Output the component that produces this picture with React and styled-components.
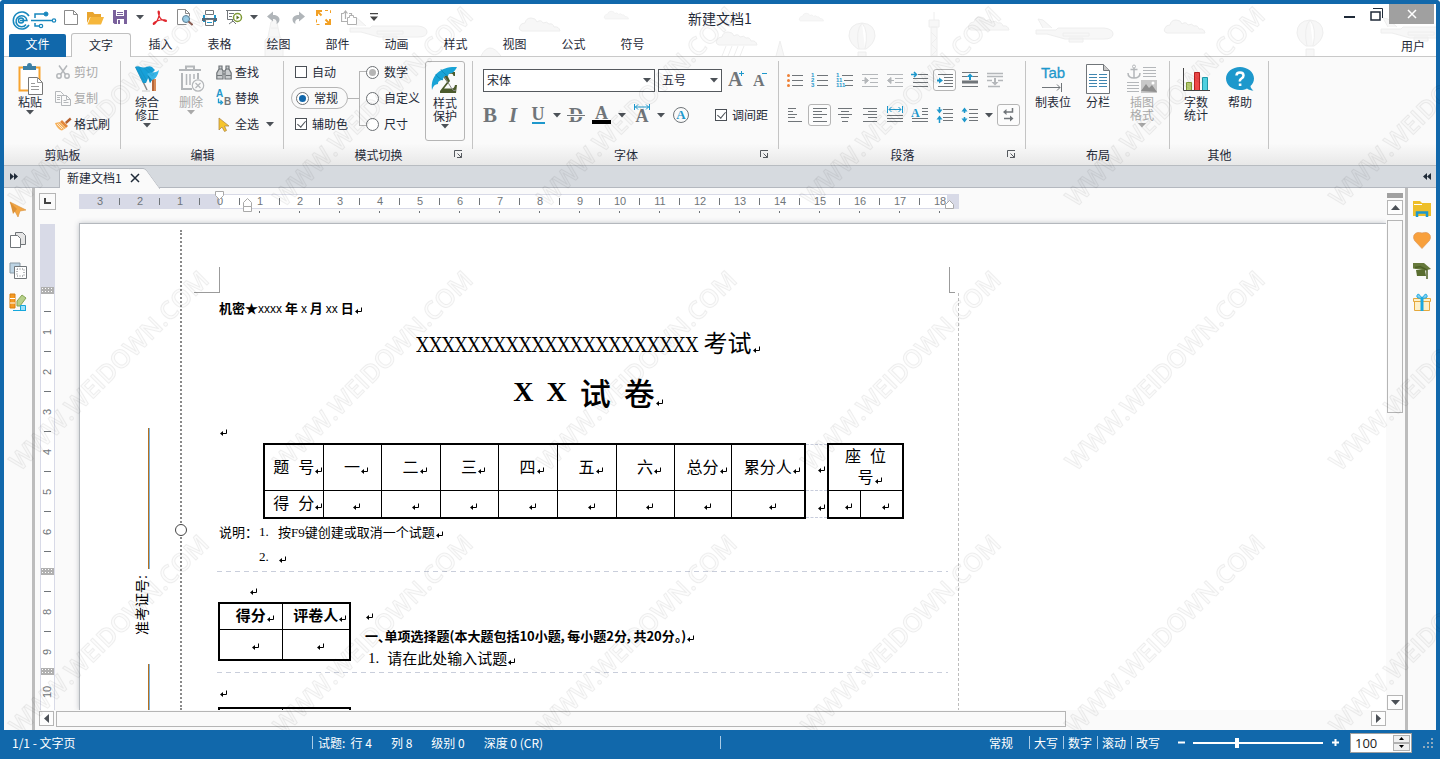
import React from 'react'
import styled, { createGlobalStyle, css } from 'styled-components'

const BLUE = '#1168ab'
const ACCENT = '#1e98cc'
const GREY = '#707579'
const PALE = '#b4b7ba'
const INK = '#1f2a38'

const GlobalStyle = createGlobalStyle`
  * {
    box-sizing: border-box;
  }

  body {
    margin: 0;
    overflow: hidden;
    color: ${INK};
    font-family: 'Noto Sans CJK SC', sans-serif;
    font-size: 12px;
    line-height: 16px;
  }

  button, input, select {
    margin: 0;
    padding: 0;
    border: 0;
    background: none;
    color: inherit;
    font: inherit;
  }

  p, h1, h2 {
    margin: 0;
    font-weight: 400;
  }
`

/* ---------- window ---------- */

const Window = styled.div`
  position: relative;
  display: flex;
  flex-direction: column;
  height: 100vh;
  border: 4px solid ${BLUE};
  border-bottom: 0;
  border-radius: 4px 4px 0 0;
  background: #fff;
`

const Header = styled.header`
  position: relative;
  height: 53px;
  border-bottom: 1px solid #c9c9c9;
  flex: none;
`

const Scenery = styled.svg`
  position: absolute;
  inset: 0;
  width: 100%;
  height: 100%;
`

const TitleBar = styled.div`
  position: relative;
  display: grid;
  grid-template-columns: 1fr auto 1fr;
  height: 29px;
`

const QuickAccess = styled.div`
  display: flex;
  align-items: center;
  padding: 0 0 4px 8px;
`

const Logo = styled.svg`
  width: 46px;
  height: 22px;
  margin-top: 5px;
`

const ToolButton = styled.button`
  display: flex;
  align-items: center;
  justify-content: center;
  flex: none;
  width: ${({ $w }) => $w || 25}px;
  height: 22px;
  border-radius: 3px;
  ${({ $boxed }) => $boxed && css`
    border: 1px solid #b5b5b5;
    background: #fcfcfc;
  `}
`

const WindowTitle = styled.h1`
  font-size: 14px;
  line-height: 28px;
`

const WindowControls = styled.div`
  display: flex;
  justify-content: flex-end;
  padding-right: 2px;
`

const ControlButton = styled.button`
  width: ${({ $close }) => ($close ? 45 : 26)}px;
  height: 20px;
  background: ${({ $close }) => ($close ? '#a0a0a0' : 'none')};
  display: flex;
  align-items: center;
  justify-content: center;
`

const MenuTabs = styled.nav`
  position: relative;
  display: flex;
  height: 24px;
  padding: 0 11px 0 5px;
`

const FileButton = styled.button`
  width: 57px;
  height: 23px;
  margin: 1px 5px 0 0;
  padding-bottom: 3px;
  border-radius: 2px 2px 0 0;
  background: ${BLUE};
  color: #fff;
`

const MenuTab = styled.button`
  width: 59px;
  height: 24px;
  padding-bottom: 2px;
  ${({ $active }) => $active && css`
    width: 60px;
    border: 1px solid #c0c0c0;
    border-bottom: 0;
    border-radius: 3px 3px 0 0;
    background: #fafafa;
  `}
`

const UserButton = styled.button`
  margin-left: auto;
  padding-top: 2px;
`

/* ---------- ribbon ---------- */

const Ribbon = styled.div`
  display: flex;
  flex: none;
  height: 109px;
  border-bottom: 1px solid #b8bcc1;
  background: linear-gradient(#fafafa 80%, #e8e8e8);
`

const Group = styled.section`
  flex: none;
  width: ${({ $w }) => $w}px;
`

const GroupBody = styled.div`
  display: flex;
  height: 88px;
  margin-top: 4px;
  padding-left: ${({ $pad }) => $pad || 0}px;
  border-right: 1px solid #c4c4c4;
`

const GroupFooter = styled.div`
  display: grid;
  grid-template-columns: 1fr auto 1fr;
  align-items: center;
  height: 12px;
  line-height: 12px;
`

const Launcher = styled.button`
  justify-self: end;
  width: 19px;
  height: 10px;
  display: flex;
  grid-column: 3;
`

const BigButton = styled.button`
  display: flex;
  flex-direction: column;
  align-items: center;
  flex: none;
  width: ${({ $w }) => $w}px;
  height: 80px;
  line-height: 13px;
  color: ${({ $off }) => ($off ? '#a9a9a9' : INK)};
  ${({ $boxed }) => $boxed && css`
    border: 1px solid #b5b5b5;
    border-radius: 3px;
  `}

  svg:last-child {
    margin-top: 2px;
  }
`

const BigIcon = styled.span`
  display: flex;
  align-items: center;
  height: 34px;
`

const BigText = styled.span`
  width: min-content;
  min-width: ${({ $min }) => $min || 24}px;
`

const SmallColumn = styled.div`
  display: flex;
  flex-direction: column;
  flex: none;
`

const SmallButton = styled.button`
  display: flex;
  align-items: center;
  height: 26px;
  margin-top: ${({ $first }) => ($first ? -2 : 0)}px;
  color: ${({ $off }) => ($off ? '#a9a9a9' : INK)};
`

const SmallIcon = styled.span`
  display: flex;
  justify-content: center;
  width: 22px;
`

const Choice = styled.label`
  display: flex;
  align-items: center;
  gap: 5px;
  height: 22px;
  margin-bottom: 4px;
  padding-left: ${({ $pad }) => $pad}px;
  white-space: nowrap;
  ${({ $pill }) => $pill && css`
    border: 1px solid #b5b5b5;
    border-radius: 11px;
  `}
`

const CheckBox = styled.input.attrs({ type: 'checkbox' })`
  appearance: none;
  flex: none;
  width: 12px;
  height: 12px;
  border: 1px solid #4a4f55;
  background: #fff;

  &:checked::before {
    content: '';
    display: block;
    width: 4px;
    height: 7px;
    margin: 0 auto;
    border: solid #4a4f55;
    border-width: 0 1px 1px 0;
    transform: rotate(40deg);
  }
`

const Radio = styled.input.attrs({ type: 'radio' })`
  appearance: none;
  flex: none;
  width: 13px;
  height: 13px;
  padding: 2px;
  border: 1px solid #6b6f73;
  border-radius: 50%;
  background: #fff;

  &:checked::before {
    content: '';
    display: block;
    width: 7px;
    height: 7px;
    border-radius: 50%;
    background: ${({ $muted }) => ($muted ? '#b5b5b5' : '#1167ab')};
  }
`

const ChoiceColumn = styled.div`
  display: flex;
  flex-direction: column;
  flex: none;
  width: ${({ $w }) => $w}px;
`

const Bracket = styled.div`
  display: flex;
  align-items: center;
  margin-top: 11px;
  height: 53px;

  &::before {
    content: '';
    width: 11px;
    border-top: 1px solid #b5b5b5;
  }

  &::after {
    content: '';
    width: 6px;
    height: 53px;
    border: 1px solid #b5b5b5;
    border-right: 0;
  }
`

const Stack = styled.div`
  display: flex;
  flex-direction: column;
  gap: 13px;
  padding-top: 8px;
`

const StackRow = styled.div`
  display: flex;
  align-items: center;
  height: 22px;
`

const SelectBox = styled.label`
  position: relative;
  display: flex;
  align-items: center;
  width: ${({ $w }) => $w}px;
  margin-right: 3px;

  select {
    appearance: none;
    width: 100%;
    height: 23px;
    padding-left: 3px;
    border: 1px solid #55595e;
    border-radius: 0;
    background: #fff;
  }

  svg {
    position: absolute;
    right: 4px;
  }
`

const Letter = styled.span`
  color: ${GREY};
  font: ${({ $italic }) => ($italic ? 'italic' : 'normal')} bold ${({ $size }) => $size || 21}px/20px 'Liberation Serif', serif;
  ${({ $bar }) => $bar && css`
    line-height: 16px;
    border-bottom: 2px solid ${ACCENT};
  `}
`

const ChoiceInline = styled.label`
  display: flex;
  align-items: center;
  gap: 5px;
  margin-left: 18px;
`

const ParaButton = styled(ToolButton)`
  width: 23px;
  margin: 0 1px;
`

/* ---------- document tabs ---------- */

const TabStrip = styled.div`
  display: flex;
  align-items: flex-end;
  flex: none;
  height: 22px;
  border-bottom: 1px solid #b4b8bf;
  background: #d6dadf;
`

const StripArrow = styled.button`
  width: ${({ $w }) => $w}px;
  height: 21px;
  color: ${INK};
  display: flex;
  align-items: center;
  justify-content: center;
`

const DocTab = styled.div`
  position: relative;
  display: flex;
  align-items: center;
  gap: 8px;
  height: 20px;
  margin: 0 auto -1px 35px;
  padding: 0 4px 2px 7px;
  border: 1px solid #b4b8bf;
  border-width: 1px 0 0 1px;
  border-radius: 3px 0 0 0;
  background: #fafafa;

  &::after {
    content: '';
    position: absolute;
    top: -1px;
    right: -9px;
    width: 16px;
    height: 20px;
    border: 1px solid #b4b8bf;
    border-width: 1px 1px 0 0;
    border-radius: 0 3px 0 0;
    background: #fafafa;
    transform: skewX(36deg);
  }

  > * {
    position: relative;
    z-index: 1;
  }
`

const CloseTab = styled.button`
  display: flex;
`

/* ---------- workspace ---------- */

const Workspace = styled.main`
  display: flex;
  flex: 1;
  min-height: 0;
`

const SideBar = styled.aside`
  display: flex;
  flex-direction: column;
  align-items: center;
  gap: 11px;
  flex: none;
  width: 31px;
  padding-top: 11px;
  border: 0 solid #bcbcbc;
  border-${({ $side }) => $side}-width: 3px;
  background: #fafafa;

  button {
    display: flex;
    align-items: center;
    justify-content: center;
    width: 24px;
    height: 20px;
  }
`

const Canvas = styled.div`
  display: grid;
  grid-template: 35px minmax(0, 1fr) 20px / 44px minmax(0, 1fr) 19px;
  flex: 1;
  min-width: 0;
  background: #fafafa;
`

const TabStop = styled.button`
  display: flex;
  align-items: center;
  justify-content: center;
  width: 17px;
  height: 17px;
  margin: 5px 0 0 4px;
  border: 1px solid #b5b5b5;
`

const Ruler = styled.div`
  position: relative;
  display: flex;
  width: 880px;
  height: 15px;
  margin-top: 6px;
  padding-left: 1px;
  border: 1px solid #d8dae7;
  border-width: 1px 0;
  background: linear-gradient(90deg, #d8dae7 141px, #fff 141px, #fff 868px, #d8dae7 868px);
  color: ${GREY};
  font: 11px/13px 'Liberation Sans', sans-serif;
`

const RulerCell = styled.span`
  position: relative;
  flex: none;
  width: 40px;
  text-align: center;

  &::after {
    content: '';
    position: absolute;
    top: 3px;
    right: 0;
    width: 1px;
    height: 7px;
    background: ${({ $last }) => ($last ? 'none' : GREY)};
  }

  ${({ $stop }) => $stop && css`
    &::before {
      content: '';
      position: absolute;
      top: 16px;
      left: 19px;
      width: 1px;
      height: 2px;
      background: ${GREY};
    }
  `}
`

const RulerMark = styled.svg`
  position: absolute;
  left: ${({ $x }) => $x}px;
  top: ${({ $y }) => $y}px;
  fill: #fff;
  stroke: #a9a9a9;
`

const SideRuler = styled.div`
  width: 15px;
  margin: 1px 0 0 5px;
  border: 1px solid #d8dae7;
  border-width: 0 1px;
  background: linear-gradient(#d8dae7 66px, #fff 66px);
  padding-top: 63px;
  overflow: hidden;
  color: ${GREY};
  font: 11px/13px 'Liberation Sans', sans-serif;
`

const Grip = styled.div`
  height: 7px;
  background: radial-gradient(#fff 1px, transparent 1px) 0 0 / 3px 3px #b0b0b0;
`

const GripCell = styled.div`
  height: 39px;
  padding-top: 16px;
`

const OverGrip = styled(Grip)`
  margin: -3px 0;
`

const SideTick = styled.div`
  height: 1px;
  width: 7px;
  margin: ${({ $first }) => ($first ? 17 : 0)}px auto 0;
  background: ${GREY};
`

const SideNumber = styled.div`
  display: flex;
  align-items: center;
  justify-content: center;
  height: 39px;
  writing-mode: vertical-rl;
  transform: rotate(180deg);
`

const VScroll = styled.div`
  grid-column: 3;
  grid-row: 1 / 3;
  display: flex;
  flex-direction: column;
  padding: 5px 2px 0 1px;
`

const SplitHandle = styled.div`
  height: 5px;
  margin-bottom: 2px;
  background: #a0a0a0;
`

const ScrollButton = styled.button`
  display: flex;
  align-items: center;
  justify-content: center;
  flex: none;
  width: ${({ $w }) => $w || 16}px;
  height: 15px;
  border: 1px solid #b5b5b5;
  background: #fdfdfd;
`

const VThumb = styled.div`
  height: 193px;
  margin: 5px 0 auto;
  border: 1px solid #b5b5b5;
  background: #fafafa;
`

const HScroll = styled.div`
  grid-column: 1 / 4;
  display: flex;
  padding: 1px 19px 3px 4px;
`

const HThumb = styled.div`
  width: 75%;
  margin: 0 auto 0 2px;
  border: 1px solid #b5b5b5;
`

/* ---------- page ---------- */

const Sheet = styled.div`
  display: flex;
  overflow: hidden;
  border: 1px solid #b4b8bd;
  border-width: 1px 0 0 1px;
  box-shadow: 0 0 5px rgba(60, 70, 90, 0.3);
  clip-path: inset(-6px 0 0 -6px);
  background: #fff;
  color: #000;
  font-size: 13px;
`

const Binding = styled.div`
  position: relative;
  display: flex;
  flex-direction: column;
  flex: none;
  width: 102px;
  margin-top: 6px;
  padding-top: 198px;
  border-right: 2px dotted #8a8a8a;
`

const BindingRing = styled.span`
  position: absolute;
  top: 294px;
  right: -7px;
  width: 12px;
  height: 12px;
  border: 1px solid #444;
  border-radius: 50%;
  background: #fff;
`

const BlankLine = styled.span`
  flex: none;
  width: 2px;
  height: 141px;
  margin-left: 68px;
  background: linear-gradient(90deg, #b5701f 50%, #7fb4dc 50%);
`

const BindingLabel = styled.span`
  flex: none;
  width: 20px;
  height: 95px;
  margin-left: 51px;
  padding-top: 29px;
  writing-mode: vertical-rl;
  text-orientation: sideways;
  transform: rotate(180deg);
  font-size: 14px;
  line-height: 20px;
`

const Page = styled.article`
  flex: none;
  width: 777px;
  padding-top: 43px;
`

const CropRow = styled.div`
  display: flex;
  justify-content: space-between;
  height: 26px;
  padding: 0 4px 0 12px;
`

const CropMark = styled.span`
  width: ${({ $right }) => ($right ? 6 : 26)}px;
  border: 0 solid #9b9b9b;
  border-bottom-width: 1px;
  ${({ $right }) => ($right ? 'border-left-width: 1px;' : 'border-right-width: 1px;')}
`

const PageBody = styled.div`
  padding: 5px 9px 0 37px;
  border-right: 1px dashed #bdbdbd;
`

const Secret = styled.p`
  height: 20px;
  line-height: 20px;
  font-weight: 700;

  span {
    font: 12px 'Liberation Sans', sans-serif;
  }
`

const ExamName = styled.h1`
  height: 36px;
  margin-top: 7px;
  font-size: 24px;
  line-height: 34px;
  text-align: center;

  span {
    font-family: 'DejaVu Serif Condensed', 'DejaVu Serif', serif;
    font-size: 20px;
  }
`

const PaperName = styled.h2`
  display: flex;
  justify-content: center;
  gap: 13px;
  height: 40px;
  margin-top: 11px;
  font-size: 31px;
  font-weight: 500;
  line-height: 40px;
`

const PaperLetter = styled.span`
  font-family: 'Liberation Serif', serif;
  font-size: 28px;
  font-weight: 700;
`

const MarkLine = styled.p`
  height: 20px;
  margin-top: ${({ $top }) => $top}px;
  padding-left: ${({ $left }) => $left || 0}px;
  line-height: 14px;
`

const ScoreTable = styled.table`
  width: 639px;
  margin: 0 0 0 44px;
  border-collapse: collapse;
  table-layout: fixed;
  font-size: 16px;
  line-height: 22px;
  text-align: center;
`

const ScoreCol = styled.col`
  width: ${({ $w }) => $w}px;
`

const Cell = styled.td`
  height: ${({ $h }) => $h}px;
  padding: 0 0 3px;
  border: 1px solid #000;
  font-weight: ${({ $bold }) => ($bold ? 700 : 400)};
  line-height: ${({ $h }) => ($h > 40 ? 21 : 22)}px;
  white-space: nowrap;
  ${({ $top }) => $top && 'border-top-width: 2px;'}
  ${({ $bottom }) => $bottom && 'border-bottom-width: 2px;'}
  ${({ $left }) => $left && 'border-left-width: 2px;'}
  ${({ $right }) => $right && 'border-right-width: 2px;'}
  ${({ $gap }) => $gap && css`
    border-top: 1px dashed #c8cddc;
    border-bottom: 1px dashed #c8cddc;
  `}
`

const Spaced = styled.span`
  display: inline-flex;
  gap: 9px;
`

const Note = styled.p`
  display: grid;
  grid-template-columns: 40px 19px 1fr;
  height: 25px;
  line-height: 25px;

  span, small {
    font: 13px/25px 'Liberation Serif', serif;
  }
`

const Cut = styled.hr`
  height: 1px;
  margin: ${({ $top }) => $top}px 1px 0 -2px;
  border: 0;
  background: repeating-linear-gradient(90deg, #c9cedb 0 5px, transparent 5px 9px);
`

const Question = styled.section`
  display: flex;
  gap: 14px;
  margin: ${({ $top }) => $top}px 0 0 -1px;
`

const GradeTable = styled.table`
  flex: none;
  align-self: flex-start;
  width: 131px;
  border-collapse: collapse;
  table-layout: fixed;
  font-size: 15px;
  text-align: center;
`

const QuestionText = styled.div`
  padding-top: 1px;
  line-height: 22px;
`

const QuestionTitle = styled.p`
  font-weight: 700;
  font-feature-settings: 'palt';
`

const QuestionItem = styled.p`
  display: flex;
  gap: 8px;
  padding-left: 3px;
  font-size: 15px;

  span {
    font-family: 'Liberation Serif', serif;
  }
`

const ReturnMark = styled.svg`
  width: 9px;
  height: 8px;
  margin: 0 -9px -2px 0;
`

/* ---------- status bar ---------- */

const StatusBar = styled.footer`
  display: grid;
  grid-template-columns: 43fr 57fr 100fr;
  align-items: start;
  flex: none;
  height: 29px;
  padding-top: 6px;
  background: ${BLUE};
  color: #fff;
  line-height: 13px;
`

const StatusCell = styled.div`
  display: flex;
  align-items: center;
  gap: 19px;
  height: 13px;
  padding-left: ${({ $pad }) => $pad || 5}px;
  border-left: ${({ $line }) => ($line ? '1px solid #a9cbe6' : '0')};
  white-space: pre;
`

const StatusRight = styled(StatusCell)`
  justify-content: flex-end;
  gap: 0;
  padding-right: 2px;
`

const StatusFlag = styled.span`
  width: 34px;
  padding-left: 4px;
  border-left: ${({ $plain }) => ($plain ? 0 : '1px solid #a9cbe6')};
`

const FlagList = styled.span`
  display: flex;
  margin: 0 9px 0 10px;
`

const ZoomButton = styled.button`
  display: flex;
  justify-content: center;
  width: 14px;
`

const ZoomSlider = styled.input.attrs({ type: 'range' })`
  appearance: none;
  width: 130px;
  height: 12px;
  margin: 0 5px;
  background: linear-gradient(#fff, #fff) center / 100% 2px no-repeat;

  &::-webkit-slider-thumb {
    appearance: none;
    width: 4px;
    height: 10px;
    background: #fff;
  }
`

const ZoomBox = styled.label`
  display: flex;
  flex: none;
  width: 62px;
  height: 20px;
  margin: 0 10px 0 8px;
  padding: 1px;
  border: 1px solid #a0a0a0;
  background: #fff;
  color: #222;

  input {
    flex: 1;
    min-width: 0;
    padding-left: 3px;
    font: 13px 'Open Sans', sans-serif;
    outline: 0;
  }
`

const Spinner = styled.span`
  display: flex;
  flex-direction: column;
  width: 17px;

  button {
    display: flex;
    align-items: center;
    justify-content: center;
    height: 8px;
    border: 1px solid #b0b0b0;
    background: #f0f0f0;
  }
`

const Overlay = styled.svg`
  position: absolute;
  left: -4px;
  top: -4px;
  width: calc(100% + 8px);
  height: calc(100% - 25px);
  pointer-events: none;
`

/* ---------- icons ---------- */

const Svg = ({ w = 18, h = w, children, ...rest }) => (
  <svg width={w} height={h} viewBox={`0 0 ${w} ${h}`} fill="none" stroke={GREY} aria-hidden="true" {...rest}>
    {children}
  </svg>
)

const Caret = ({ color = '#4c5157' }) => (
  <Svg w={8} h={5} stroke="none"><path d="M0 0h8L4 4.500z" fill={color} /></Svg>
)

const Ret = () => (
  <ReturnMark viewBox="0 0 9 8" aria-hidden="true">
    <path d="M7.500 .5v4H3" fill="none" stroke="#000" />
    <path d="M1 4.500l3-2.500v5z" />
  </ReturnMark>
)

const NewIcon = () => (
  <Svg w={14} h={17}><path d="M.5 1.500h9l4 4v10H.5zM9.500 1.500v4h4" fill="#fff" stroke="#8a8a8a" /></Svg>
)
const OpenIcon = () => (
  <Svg w={17} h={16} stroke="none">
    <path d="M0 2h6l1.500 2H14v3H3L0 13z" fill="#e9a52e" />
    <path d="M3.500 7H17l-3 7.500H.5z" fill="#f6b73c" />
  </Svg>
)
const SaveIcon = () => (
  <Svg w={15} h={15} stroke="none">
    <path d="M0 0h14v14H1.500L0 12.500z" fill="#7a619c" />
    <path d="M3 0h8v6H3zM4 9h7v5H4z" fill="#fff" />
    <path d="M4 2h6v1H4zM4 4h6v1H4z" fill="#7a619c" />
    <path d="M5 10h2v4H5z" fill="#7a619c" />
  </Svg>
)
const PdfIcon = () => (
  <Svg w={16} h={16} stroke="#e0242b" strokeWidth="1.200">
    <path d="M6.500 1c1.500 0 .8 4 0 6.500C5.500 10.500 3 14.500 1.500 14.500c-1.500-1.500 4-4 7-4.500 3-.5 6-.2 6 .8 0 1.600-4-.3-6-2.500C6.800 6.500 5.500 1 6.500 1z" />
  </Svg>
)
const PreviewIcon = () => (
  <Svg w={16} h={17}>
    <path d="M9.500 15.500h-9V.5h8l4 4v3M8.500.5v4h4" stroke="#8a8a8a" />
    <circle cx="9" cy="10" r="3.500" fill="#9fd3ee" stroke="#5a7f96" />
    <path d="M11.500 12.500l4 3.500" stroke="#8f6258" strokeWidth="2" />
  </Svg>
)
const PrintIcon = () => (
  <Svg w={15} h={16} stroke="none">
    <path d="M3.500.5h8v4h-8z" fill="#fff" stroke={GREY} />
    <path d="M1 5h2v3h9V5h2v7H1z" fill={ACCENT} />
    <path d="M0 8h15v3H0z" fill="#54697a" />
    <path d="M3.500 9.500h8v6h-8z" fill="#fff" stroke={GREY} />
    <path d="M5 12h5v1H5z" fill={ACCENT} />
  </Svg>
)
const ProjectorIcon = () => (
  <Svg w={17} h={15}>
    <path d="M0 .5h15M1.500 1v8.500h6M3 3.500h5M3 6.500h3M6.500 10v2M3 14l4-3 3 3" />
    <circle cx="11.500" cy="7.500" r="4" fill="#fff" stroke="#7f9a35" strokeWidth="1.500" />
    <path d="M10.500 5.500l3 2-3 2z" fill="#5c7420" stroke="none" />
  </Svg>
)
const UndoIcon = ({ flip }) => (
  <Svg w={13} h={13} stroke="none">
    <g transform={flip ? 'translate(13 0) scale(-1 1)' : undefined}>
      <path d="M0 5.500L6 .5V4c4 0 6.500 2 6.500 4.500 0 2-1.200 3.500-3 4.500.8-3-.5-5-3.500-5v2.500z" fill="#b0b5b9" />
    </g>
  </Svg>
)
const FullIcon = () => (
  <Svg w={15} h={15} stroke="#f2a024" strokeWidth="2">
    <path d="M6 1H1v5M1.500 1.500l4 4M9 14h5V9M13.500 13.500l-4-4" />
    <path d="M9 .5h5.500V5M.5 9.500v5H5" stroke="#f2a024" strokeWidth="1" strokeDasharray="3 2" />
  </Svg>
)
const ShareIcon = () => (
  <Svg w={16} h={16} stroke="#b0b0b0">
    <path d="M6.500 11.500h-6v-8h2M8 3.500h2.500v2M4.500 9V1.500M2.500 3.500l2-2.500 2 2.500" strokeWidth="1.200" />
    <path d="M6.500 7.500h2v-2h4v2h3v7h-9z" fill="#fff" />
  </Svg>
)
const CustomIcon = () => (
  <Svg w={8} h={9} stroke="none"><path d="M0 0h8v1.200H0zM0 3.500h8L4 8z" fill="#444" /></Svg>
)

const PasteIcon = () => (
  <Svg w={25} h={32}>
    <path d="M1.500 4.500h20v23h-20z" fill="#fff" stroke="#f7a430" strokeWidth="2" />
    <path d="M5 7V3h4q0-3 2.500-3T14 3h4v4z" fill="#3b7fa6" stroke="none" />
    <path d="M10.500 14.500h9l5 5v12h-14z" fill="#fff" stroke="#777" />
    <path d="M19.500 14.500v5h5M13 20.500h4M13 23.500h8M13 26.500h8" stroke="#999" />
  </Svg>
)
const CutIcon = () => (
  <Svg w={14} h={14} stroke={PALE} strokeWidth="1.500">
    <path d="M3 .5l6.500 9M11 .5l-6.500 9" />
    <circle cx="3" cy="11" r="2.200" /><circle cx="11" cy="11" r="2.200" />
  </Svg>
)
const CopyIcon = () => (
  <Svg w={16} h={15} stroke={PALE}>
    <path d="M5.500 11.500h-5V.5h5l3 3v1M2 4.500h4M2 6.500h3M2 8.500h3" />
    <path d="M6.500 4.500h5l4 4v6h-9zM11.500 4.500v4h4M8.500 9.500h3M8.500 11.500h5" fill="#fafafa" />
  </Svg>
)
const BrushIcon = () => (
  <Svg w={17} h={14} stroke="none">
    <path d="M10 5l5-4.500 1.500 2-5 4.500z" fill="#b4602c" />
    <path d="M7 3l6 6-2 2-6-6z" fill="#e2873a" />
    <path d="M5 5l6 6-4 2.500C4 13 1.500 10 0 6z" fill="#f6b15c" />
    <path d="M2 7l5 5M3.500 6.500l5 5" stroke="#fff" strokeWidth=".7" />
  </Svg>
)
const FixIcon = () => (
  <Svg w={25} h={28} stroke="none">
    <path d="M17 14h4v12h-4z" fill="#b5673a" /><path d="M19 14h2v12h-2z" fill="#d98b56" />
    <path d="M1 2l11 23" stroke="#888" strokeWidth="1.500" />
    <path d="M0 2c4-2 6 1 9 .5S14 0 17 2l3 3-6 6-3 7H8z" fill="#16a0d8" />
    <path d="M12 9c3-3 8 0 12-4-1 5-3 9-7 10l-2 3z" fill="#36b5e8" />
    <path d="M12 9l5 6-2 3z" fill="#0d87b8" />
    <path d="M7 26h8" stroke="#ccc" />
  </Svg>
)
const TrashIcon = () => (
  <Svg w={27} h={28} stroke={PALE} strokeWidth="2">
    <path d="M1 5h22M8 5V1.500h8V5M4 8v16h10M20 8v6" />
    <path d="M8.500 9v11M12 9v11M16 9v5" strokeWidth="1.500" />
    <circle cx="20" cy="20.500" r="5.700" fill="#fafafa" strokeWidth="1.200" />
    <path d="M17.500 18l5 5M22.500 18l-5 5" strokeWidth="1.200" />
  </Svg>
)
const FindIcon = () => (
  <Svg w={16} h={15} stroke={GREY} strokeWidth="1.200">
    <path d="M3 1h3v3l1 2v8H.8V8L3 4zM13 1h-3v3L9 6v8h6.200V8L13 4z" fill="#c9ccce" />
    <path d="M7 6h2M7 9h2M1 10.500h5M10 10.500h5M3 4h3M10 4h3" />
  </Svg>
)
const ReplaceIcon = () => (
  <Svg w={17} h={20} stroke="none">
    <text x="0" y="9" fill={ACCENT} fontFamily="Liberation Sans" fontWeight="700" fontSize="10">A</text>
    <text x="8" y="17" fill={GREY} fontFamily="Liberation Sans" fontWeight="700" fontSize="10">B</text>
    <path d="M2.500 10.500v4h3M4.500 12.500l2 2-2 2" fill="none" stroke={ACCENT} strokeWidth="1.300" />
  </Svg>
)
const PointerIcon = () => (
  <Svg w={12} h={15}><path d="M1 1v12l3-3 2.500 4.500 2-1L6.500 9H11z" fill="#f6c52c" stroke="#b38a4a" strokeWidth=".8" /></Svg>
)
const UmbrellaIcon = () => (
  <Svg w={28} h={28} stroke="none">
    <path d="M9 6h15v4h-1.500c-.5-2-1-2.200-3-2.200h-4L19 15l-6 7.500h7c2 0 3.500-.5 4-3.500H26l-1 8H9v-2l7-9-6-8z" fill="#4b5a2b" />
    <path d="M10 5L21 23q2 3 4 1" fill="none" stroke="#888" />
    <path d="M1 24C-1 10 9 0 26 1c-1 2-3 5-5 6-2 0-3 0-4 3-3-1-5 1-5 4-3 0-5 1-5 4-3 0-5 2-6 6z" fill="#18a3d6" />
    <path d="M17 10C13 8 10 4 10 3M12 14C8 12 5 10 5 8" fill="none" stroke="#0c7fae" strokeWidth=".7" />
  </Svg>
)
const CircleAIcon = () => (
  <Svg w={18} stroke={GREY}>
    <circle cx="9" cy="9" r="7.500" />
    <text x="9" y="13" textAnchor="middle" stroke="none" fill={ACCENT} fontFamily="Liberation Serif" fontWeight="700" fontSize="13">A</text>
  </Svg>
)
const GrowIcon = ({ minus }) => (
  <Svg w={20} h={24} stroke="none">
    <text x="0" y="18" fill={GREY} fontFamily="Liberation Serif" fontWeight="700" fontSize={minus ? 16 : 20}>A</text>
    <path d={minus ? 'M9 5h5v1H9z' : 'M11 5h5v1h-5zM13 3h1v5h-1z'} fill={ACCENT} />
  </Svg>
)
const SpreadIcon = () => (
  <Svg w={18} h={24} stroke="none">
    <path d="M1.500 1v6M16.500 1v6M2 4h14M5 1.500L2.500 4 5 6.500M13 1.500L15.500 4 13 6.500" fill="none" stroke={ACCENT} />
    <text x="9" y="19" textAnchor="middle" fill={GREY} fontFamily="Liberation Serif" fontWeight="700" fontSize="18">A</text>
  </Svg>
)
const StrikeIcon = () => (
  <Svg w={18} h={24} stroke="none">
    <text x="9" y="19" textAnchor="middle" fill={GREY} fontFamily="Liberation Serif" fontWeight="700" fontSize="20">D</text>
    <path d="M0 11h18v3H0z" fill="#fafafa" /><path d="M0 12h18v1H0z" fill={GREY} />
  </Svg>
)
const FontColorIcon = () => (
  <Svg w={19} h={24} stroke="none">
    <text x="9.500" y="16" textAnchor="middle" fill={GREY} fontFamily="Liberation Serif" fontWeight="700" fontSize="18">A</text>
    <path d="M0 17h19v4H0z" fill="#000" />
  </Svg>
)
const TabIcon = () => (
  <Svg w={30} h={30} stroke={GREY}>
    <text x="15" y="14" textAnchor="middle" stroke={ACCENT} strokeWidth=".3" fill={ACCENT} fontFamily="Liberation Sans" fontSize="15">Tab</text>
    <path d="M4 23.500h18M19 20.500l3 3-3 3M23.500 19v9" />
  </Svg>
)
const ColumnsIcon = () => (
  <Svg w={26} h={30}>
    <path d="M1.500.5h17l6 6v23h-23z" fill="#fff" /><path d="M18.500.5v6h6" fill="#c9c9c9" />
    <path d="M4 10.500h8M4 13.500h8M4 16.500h8M4 19.500h8M4 22.500h8M14 10.500h8M14 13.500h8M14 16.500h8M14 19.500h8M14 22.500h8" stroke="#3f86b0" />
  </Svg>
)
const PictureIcon = () => (
  <Svg w={30} h={30} stroke={PALE}>
    <path d="M7 4v10M3.500 5.500h7M1 9q0 5 6 5t6-5" strokeWidth="1.500" /><circle cx="7" cy="2.500" r="1.500" />
    <path d="M16 3.500h13M16 6.500h13M16 9.500h13M16 12.500h13M0 18.500h12M0 21.500h12M0 24.500h12M0 27.500h12" />
    <path d="M14 16h16v13H14z" fill="#c8c8c8" stroke="none" />
    <path d="M14 27l5-7 3 4 3-3 5 7" fill="#8e8e8e" stroke="none" /><circle cx="26" cy="19" r="1.500" fill="#fff" stroke="none" />
  </Svg>
)
const ChartIcon = () => (
  <Svg w={28} h={26} stroke="#444">
    <path d="M4.500 16.500h5v8h-5z" fill="#b8cf72" stroke="#7f9a35" />
    <path d="M12.500 6.500h5v18h-5z" fill="#f04848" stroke="#b82020" />
    <path d="M20.500 11.500h5v13h-5z" fill="#4fd0e0" stroke="#1f97a8" />
    <path d="M1.500 2v22.500H28" />
  </Svg>
)
const HelpIcon = () => (
  <Svg w={28} h={26} stroke="none">
    <path d="M14 1C6.500 1 0 6 0 12.500S6 24 14 24c3 0 5-.5 7-1.500 2 1.500 4 2 6.500 2-2-1.500-3-3-3-4.500 2-2 3.500-4.500 3.500-7.500C28 6 21.500 1 14 1z" fill={ACCENT} />
    <path d="M10.500 9.500Q10.500 6.500 14 6.500t3.500 3q0 1.800-2 3T14 15.500" fill="none" stroke="#fff" strokeWidth="2.500" />
    <path d="M12.800 17.500h2.600V20h-2.600z" fill="#fff" />
  </Svg>
)
const LaunchIcon = () => (
  <Svg w={9} h={9} stroke="#55595e"><path d="M.5 7V.5H8M3.500 3.500l4 4M7.500 3v4.500H3" /></Svg>
)

const digits = (marks) => marks.map((m, i) => (
  <text key={m} x="0" y={6 + i * 5} fill={ACCENT} stroke="none" fontFamily="Liberation Sans" fontWeight="700" fontSize="6">{m}</text>
))

const paragraphTop = [
  { name: '项目符号', art: <><path d="M6 4.500h11M6 9.500h11M6 14.500h11" /><g fill="#ee8036" stroke="none"><circle cx="2.500" cy="4.500" r="1.500" /><circle cx="2.500" cy="9.500" r="1.500" /><circle cx="2.500" cy="14.500" r="1.500" /></g></> },
  { name: '编号', art: <><path d="M6 4.500h11M6 9.500h11M6 14.500h11" />{digits(['1', '2', '3'])}</> },
  { name: '多级编号', art: <><path d="M6 4.500h11M8 9.500h9M9 14.500h8" />{digits(['1', '11', '111'])}</> },
  { name: '增加缩进', art: <g stroke={PALE}><path d="M1 3.500h16M9 7.500h8M9 11.500h8M1 15.500h16M1 9.500h6" /><path d="M4 6.500l3.500 3-3.500 3z" fill={PALE} /></g> },
  { name: '减少缩进', art: <g stroke={PALE}><path d="M1 3.500h16M9 7.500h8M9 11.500h8M1 15.500h16M2 9.500h6" /><path d="M5 6.500l-3.500 3 3.500 3z" fill={PALE} /></g> },
  { name: '首行缩进', art: <><path d="M7 3.500h10M2 7.500h15M2 11.500h15M2 15.500h15" /><path d="M0 3.500h5M3 1l2.500 2.500L3 6" stroke={ACCENT} strokeWidth="1.500" /></> },
  { name: '左缩进', boxed: true, art: <><path d="M2 3.500h15M8 6.500h9M8 9.500h9M8 12.500h9M2 15.500h15" /><path d="M1 9.500h3" stroke={ACCENT} strokeWidth="2" /><path d="M3 6.500l4 3-4 3z" fill={ACCENT} stroke="none" /></> },
  { name: '段前距', art: <><path d="M1 1.500h16M1 5.500h5M12 5.500h5M1 15.500h16" /><path d="M1 11h16" strokeWidth="3" /><path d="M9 2.500L5.500 6H8v3h2V6h2.500z" fill={ACCENT} stroke="none" /></> },
  { name: '段后距', art: <g stroke={PALE}><path d="M1 5.500h16M1 2.500h16M1 9.500h5M12 9.500h5M2 15.500h12" strokeWidth="1.500" /><path d="M9 14.500L5.500 11H8V7h2v4h2.500z" fill={PALE} stroke="none" /></g> },
]

const paragraphBottom = [
  { name: '自动对齐', art: <path d="M2 2.500h8M2 5.500h5M2 8.500h9M2 11.500h7M2 15.500h14" /> },
  { name: '左对齐', boxed: true, art: <path d="M2 2.500h14M2 5.500h9M2 8.500h14M2 11.500h9M2 15.500h14" /> },
  { name: '居中', art: <path d="M2 2.500h14M5 5.500h8M2 8.500h14M5 11.500h8M6 15.500h6" /> },
  { name: '右对齐', art: <path d="M2 2.500h14M7 5.500h9M2 8.500h14M7 11.500h9M2 15.500h14" /> },
  { name: '分散对齐', art: <><path d="M1 9.500h16M1 12.500h16M1 15.500h16" /><path d="M1.500 0v7M16.500 0v7M3 3.500h12M5.500 1L3 3.500 5.500 6M12.500 1L15 3.500 12.500 6" stroke={ACCENT} /></> },
  { name: '首字下沉', art: <><path d="M11 2.500h6M11 5.500h6M11 8.500h6M1 12.500h16M1 15.500h16" /><text x="0" y="11" fill={ACCENT} stroke="none" fontFamily="Liberation Serif" fontWeight="700" fontSize="12">A</text></> },
  { name: '减小行距', art: <><path d="M7 3.500h10M7 7.500h10M7 11.500h10M7 14.500h10" /><path d="M3.500 1v4M3.500 17v-4" stroke={ACCENT} strokeWidth="1.500" /><path d="M.5 3.500h6l-3 4zM.5 13.500h6l-3-4z" fill={ACCENT} stroke="none" /></> },
  { name: '增大行距', art: <><path d="M8 3.500h9M8 7.500h9M8 11.500h9M8 14.500h9" /><path d="M3.500 3v4M3.500 15v-4" stroke={ACCENT} strokeWidth="1.500" /><path d="M.5 5.500h6l-3-4zM.5 12.500h6l-3 4z" fill={ACCENT} stroke="none" /></> },
]

const sideLeft = [
  { name: '发送', art: <><path d="M1 2l16 8-6 1-2 6z" fill="#f4a744" stroke="#d9913a" strokeWidth=".6" /><path d="M1 2l3 12 4-5z" fill="#dc9137" stroke="none" /></> },
  { name: '页面', art: <><path d="M6.500 1.500h7l3 3v9h-10z" fill="#e6e6e6" /><path d="M1.500 4.500h7l3 3v9h-10z" fill="#fff" /></> },
  { name: '图层', art: <><path d="M1 1h10v10H1z" fill="#bcd3e3" stroke="#8a9aa5" /><path d="M5.500 4.500h12v12h-12z" fill="#fff" /><path d="M8 7h7v7H8z" strokeDasharray="1 1.500" /></> },
  { name: '样式库', art: <><path d="M1 1h5v14H1z" fill="#f59a23" stroke="#d87f10" /><path d="M1 5.500h5M1 10h5" stroke="#fff" /><path d="M8 8l5-6 4 3-6 8H8z" fill="#b6d08a" stroke="#86a455" /><path d="M4 17.500h13M11.500 12.500h5v5h-5z" fill="#9be0fa" stroke="#15a7dc" /></> },
]

const sideRight = [
  { name: '资源', art: <><path d="M0 1h7l2 2h9v13H0z" fill="#eebf2a" stroke="none" /><path d="M1 4.500h8" stroke="#fff" /><path d="M4 17v-4.500h10V17" stroke={ACCENT} strokeWidth="2.500" /></> },
  { name: '收藏', art: <path d="M9 17.500L1.500 9.500Q0 7 .8 4.500 3 0 9 2q6-2 8.200 2.500.8 2.500-.7 5z" fill="#f8a03c" stroke="#dd9657" strokeWidth=".7" /> },
  { name: '课程', art: <><path d="M0 1h11l7 6-6 1.500-12-2z" fill="#66793c" stroke="none" /><path d="M3 8h9l1 6H4z" fill="#5a6e31" stroke="none" /><path d="M8 4.500l-6 1M8 5l6 3v9" stroke="#4d6026" strokeWidth="1.500" /></> },
  { name: '礼品', art: <><path d="M1.500 8.500h15v9h-15z" fill="#fdf0c8" stroke="#e4a83c" /><path d="M.5 5.500h17v3H.5z" fill="#fdf0c8" stroke="#e4a83c" /><path d="M9 5v13" stroke="#18a8e0" strokeWidth="3" /><path d="M9 5Q3 6 4 2.500T9 5q4-6 5-2.500T9 5z" fill="#7fd0f2" stroke="#18a8e0" /></> },
]

/* faint travel drawings behind the title */
const Cloud = ({ x, y, s = 1 }) => (
  <path transform={`translate(${x} ${y}) scale(${s})`} d="M3 15Q-1 14 1 10q1-3 5-3 1-5 6-5t6 4q4-3 6 1 4-2 6 1 4-1 5 3 5-1 6 4z" />
)
const Plane = ({ x, y }) => (
  <g transform={`translate(${x} ${y})`}>
    <path d="M8 9L3 0l5 1 9 8M1 11h20l2-2h46q9 1 9 6t-9 5H30L12 15H1zM28 14h26v3H28zM34 19h14v4H34z" />
  </g>
)
const Balloon = ({ x, y }) => (
  <g transform={`translate(${x} ${y})`}>
    <path d="M13 0Q0 1 0 13q1 8 9 13h8q8-5 9-13Q26 1 13 0zM13 0Q6 8 10 26M13 0q7 8 3 26M9 29h8v8H9z" />
  </g>
)

const menus = ['文字', '插入', '表格', '绘图', '部件', '动画', '样式', '视图', '公式', '符号']
const rulerNumbers = [3, 2, 1, ...Array.from({ length: 19 }, (_, i) => i)]
const scoreHeads = ['题 号', '一', '二', '三', '四', '五', '六', '总分', '累分人']
const scoreWidths = [59, 58, 59, 58, 59, 59, 58, 57, 74, 23, 32, 43]

const Footer = ({ title, launch }) => (
  <GroupFooter>
    <span />
    {title}
    {launch && <Launcher aria-label={`${title}设置`}><LaunchIcon /></Launcher>}
  </GroupFooter>
)

const Big = ({ icon, text, w, caret, off, boxed, min }) => (
  <BigButton $w={w} $off={off} $boxed={boxed}>
    <BigIcon>{icon}</BigIcon>
    <BigText $min={min}>{text}</BigText>
    {caret && <Caret color={off ? '#a9a9a9' : undefined} />}
  </BigButton>
)

const Small = ({ icon, text, off, first, caret }) => (
  <SmallButton $off={off} $first={first}>
    <SmallIcon>{icon}</SmallIcon>
    {text}
    {caret && <SmallIcon><Caret /></SmallIcon>}
  </SmallButton>
)

const CaretButton = ({ name, w = 14 }) => (
  <ToolButton $w={w} aria-label={name}><Caret /></ToolButton>
)

const RibbonArea = () => (
  <Ribbon>
    <Group $w={117}>
      <GroupBody $pad={4}>
        <Big w={44} icon={<PasteIcon />} text="粘贴" caret />
        <SmallColumn>
          <Small first off icon={<CutIcon />} text="剪切" />
          <Small off icon={<CopyIcon />} text="复制" />
          <Small icon={<BrushIcon />} text="格式刷" />
        </SmallColumn>
      </GroupBody>
      <Footer title="剪贴板" />
    </Group>

    <Group $w={163}>
      <GroupBody $pad={4}>
        <Big w={44} icon={<FixIcon />} text="综合修正" caret />
        <Big w={44} off icon={<TrashIcon />} text="删除" caret />
        <SmallColumn>
          <Small first icon={<FindIcon />} text="查找" />
          <Small icon={<ReplaceIcon />} text="替换" />
          <Small icon={<PointerIcon />} text="全选" caret />
        </SmallColumn>
      </GroupBody>
      <Footer title="编辑" />
    </Group>

    <Group $w={189}>
      <GroupBody $pad={7}>
        <ChoiceColumn $w={57}>
          <Choice $pad={4}><CheckBox />自动</Choice>
          <Choice $pad={4} $pill><Radio name="mode" defaultChecked />常规</Choice>
          <Choice $pad={4}><CheckBox defaultChecked />辅助色</Choice>
        </ChoiceColumn>
        <Bracket />
        <ChoiceColumn $w={59}>
          <Choice><Radio name="submode" $muted defaultChecked />数学</Choice>
          <Choice><Radio name="submode" />自定义</Choice>
          <Choice><Radio name="submode" />尺寸</Choice>
        </ChoiceColumn>
        <Big w={40} boxed icon={<UmbrellaIcon />} text="样式保护" caret />
      </GroupBody>
      <Footer title="模式切换" launch />
    </Group>

    <Group $w={306}>
      <GroupBody $pad={10}>
        <Stack>
          <StackRow>
            <SelectBox $w={172}>
              <select aria-label="字体" defaultValue="宋体"><option>宋体</option></select>
              <Caret />
            </SelectBox>
            <SelectBox $w={64}>
              <select aria-label="字号" defaultValue="五号"><option>五号</option></select>
              <Caret />
            </SelectBox>
            <ToolButton aria-label="增大字号"><GrowIcon /></ToolButton>
            <ToolButton aria-label="减小字号"><GrowIcon minus /></ToolButton>
          </StackRow>
          <StackRow>
            <ToolButton $w={14} aria-label="加粗"><Letter>B</Letter></ToolButton>
            <ToolButton $w={32} aria-label="倾斜"><Letter $italic>I</Letter></ToolButton>
            <ToolButton $w={18} aria-label="下划线"><Letter $size={18} $bar>U</Letter></ToolButton>
            <CaretButton name="下划线选项" w={20} />
            <ToolButton $w={18} aria-label="删除线"><StrikeIcon /></ToolButton>
            <ToolButton $w={33} aria-label="字体颜色"><FontColorIcon /></ToolButton>
            <CaretButton name="颜色选项" w={8} />
            <ToolButton $w={31} aria-label="字符宽度"><SpreadIcon /></ToolButton>
            <CaretButton name="宽度选项" w={8} />
            <ToolButton $w={32} aria-label="带圈字符"><CircleAIcon /></ToolButton>
            <ChoiceInline><CheckBox defaultChecked />调间距</ChoiceInline>
          </StackRow>
        </Stack>
      </GroupBody>
      <Footer title="字体" launch />
    </Group>

    <Group $w={247}>
      <GroupBody $pad={3}>
        <Stack>
          <StackRow>
            {paragraphTop.map(({ name, art, boxed }) => (
              <ParaButton key={name} $boxed={boxed} aria-label={name}><Svg>{art}</Svg></ParaButton>
            ))}
          </StackRow>
          <StackRow>
            {paragraphBottom.map(({ name, art, boxed }) => (
              <ParaButton key={name} $boxed={boxed} aria-label={name}><Svg>{art}</Svg></ParaButton>
            ))}
            <CaretButton name="行距选项" />
            <ParaButton $boxed aria-label="显示段落标记">
              <Svg>
                <path d="M12.500 2v4H4M11 12.500H4" strokeWidth="1.500" />
                <path d="M6.500 3L3 6l3.500 3zM10 9.500l3.500 3-3.500 3z" fill={GREY} stroke="none" />
              </Svg>
            </ParaButton>
          </StackRow>
        </Stack>
      </GroupBody>
      <Footer title="段落" launch />
    </Group>

    <Group $w={144}>
      <GroupBody $pad={4}>
        <Big w={46} icon={<TabIcon />} text="制表位" min={36} />
        <Big w={44} icon={<ColumnsIcon />} text="分栏" />
        <Big w={44} off icon={<PictureIcon />} text="插图格式" caret />
      </GroupBody>
      <Footer title="布局" />
    </Group>

    <Group $w={99}>
      <GroupBody $pad={4}>
        <Big w={44} icon={<ChartIcon />} text="字数统计" />
        <Big w={44} icon={<HelpIcon />} text="帮助" />
      </GroupBody>
      <Footer title="其他" />
    </Group>
  </Ribbon>
)

const VerticalRuler = () => (
  <SideRuler>
    <Grip />
    <SideTick $first />
    {[1, 2, 3, 4, 5, 6, 7, 8, 9, 10].map((n) => (
      <React.Fragment key={n}>
        {n === 7 ? <GripCell><Grip /></GripCell> : <SideNumber>{n}</SideNumber>}
        {n === 9 ? <OverGrip /> : <SideTick />}
      </React.Fragment>
    ))}
  </SideRuler>
)

const ScoreSheet = () => (
  <ScoreTable>
    <colgroup>{scoreWidths.map((w, i) => <ScoreCol key={i} $w={w} />)}</colgroup>
    <tbody>
      <tr>
        {scoreHeads.map((head, i) => (
          <Cell key={head} $h={46} $top $left={i === 0} $right={i === 8}>
            {i === 0 ? <Spaced><span>题</span><span>号</span></Spaced> : head}<Ret />
          </Cell>
        ))}
        <Cell $h={46} $gap><Ret /></Cell>
        <Cell $h={46} $top $left $right colSpan={2}>
          <Spaced><span>座</span><span>位</span></Spaced><br />号<Ret />
        </Cell>
      </tr>
      <tr>
        <Cell $h={27} $bottom $left><Spaced><span>得</span><span>分</span></Spaced><Ret /></Cell>
        {scoreHeads.slice(1).map((head, i) => (
          <Cell key={head} $h={27} $bottom $right={i === 7}><Ret /></Cell>
        ))}
        <Cell $h={27} $gap><Ret /></Cell>
        <Cell $h={27} $bottom $left><Ret /></Cell>
        <Cell $h={27} $bottom $right><Ret /></Cell>
      </tr>
    </tbody>
  </ScoreTable>
)

const GradeBox = ({ heads = [] }) => (
  <GradeTable>
    <colgroup><ScoreCol $w={63} /><ScoreCol $w={68} /></colgroup>
    <tbody>
      <tr>
        <Cell $h={27} $bold $top $left>{heads[0]}<Ret /></Cell>
        <Cell $h={27} $bold $top $right>{heads[1]}<Ret /></Cell>
      </tr>
      <tr>
        <Cell $h={30} $left $bottom><Ret /></Cell>
        <Cell $h={30} $right $bottom><Ret /></Cell>
      </tr>
    </tbody>
  </GradeTable>
)

const ExamPaper = () => (
  <Sheet>
    <Binding>
      <BlankLine />
      <BindingLabel>准考证号:</BindingLabel>
      <BlankLine />
      <BindingRing />
    </Binding>
    <Page>
      <CropRow><CropMark /><CropMark $right /></CropRow>
      <PageBody>
        <Secret>机密★<span>xxxx</span> 年 <span>x</span> 月 <span>xx</span> 日<Ret /></Secret>
        <ExamName><span>XXXXXXXXXXXXXXXXXXXXXX</span> 考试<Ret /></ExamName>
        <PaperName>
          <PaperLetter>X</PaperLetter><PaperLetter>X</PaperLetter>
          <span>试</span><span>卷<Ret /></span>
        </PaperName>
        <MarkLine $top={11}><Ret /></MarkLine>
        <ScoreSheet />
        <Note>说明：<span>1.</span><div>按<small>F9</small>键创建或取消一个试题<Ret /></div></Note>
        <Note><i /><span>2.</span><div><Ret /></div></Note>
        <Cut $top={2} />
        <MarkLine $top={10} $left={30}><Ret /></MarkLine>
        <Question $top={0}>
          <GradeBox heads={['得分', '评卷人']} />
          <QuestionText>
            <p><Ret /></p>
            <QuestionTitle>一、单项选择题(本大题包括10小题，每小题2分，共20分。)<Ret /></QuestionTitle>
            <QuestionItem><span>1.</span><div>请在此处输入试题<Ret /></div></QuestionItem>
          </QuestionText>
        </Question>
        <Cut $top={3} />
        <MarkLine $top={11}><Ret /></MarkLine>
        <Question $top={3}><GradeBox /></Question>
      </PageBody>
    </Page>
  </Sheet>
)

const SideTools = ({ side, items }) => (
  <SideBar $side={side}>
    {items.map(({ name, art }) => (
      <button key={name} aria-label={name}><Svg>{art}</Svg></button>
    ))}
  </SideBar>
)

export default function App() {
  return (
    <>
      <GlobalStyle />
      <Window>
        <Header>
          <Scenery aria-hidden="true" fill="#f7f7f7" stroke="#eeeeee">
            <Plane x={345} y={13} /><path d="M261 52V36l3-3 3-15 5-4 4 19 3 3v16M267 24h7M265 33h11" />
            <path d="M477 52q8-16 20 0" /><Cloud x={515} y={12} /><Cloud x={600} y={6} s={0.6} />
            <Cloud x={712} y={26} /><path d="M722 42l-4 10M728 42l-4 10M734 42l-4 10M740 42l-4 10" />
            <path d="M772 52l4-15 4 15" /><Cloud x={795} y={8} s={0.6} /><Balloon x={845} y={19} />
            <path d="M925 16h10v7h-10zM930 8v8M927 23h6v29h-6zM927 28l6 6-6 6 6 6-6 6" />
            <Cloud x={964} y={11} /><Plane x={1031} y={15} /><Cloud x={1160} y={14} /><Balloon x={1293} y={16} /><Plane x={1376} y={14} />
          </Scenery>
          <TitleBar>
            <QuickAccess>
              <Logo viewBox="0 0 46 22" fill="none" stroke="#1787bd" strokeWidth="2" aria-hidden="true">
                <path d="M17 16a8.500 8.500 0 1 1 0-9M14 15.500a5.500 5.500 0 1 1 1-4H8" strokeWidth="1.500" />
                <circle cx="9" cy="11.500" r="2.500" strokeWidth="1.500" />
                <path d="M32 5h-9v4M19 11.500h21M23 14v3h4" strokeWidth="1.500" />
                <circle cx="34" cy="5" r="2" fill="#1787bd" strokeWidth="1" />
                <circle cx="42" cy="11.500" r="1.700" strokeWidth="1.200" />
                <circle cx="29" cy="17" r="1.700" strokeWidth="1.200" />
              </Logo>
              <ToolButton aria-label="新建"><NewIcon /></ToolButton>
              <ToolButton aria-label="打开"><OpenIcon /></ToolButton>
              <ToolButton aria-label="保存"><SaveIcon /></ToolButton>
              <CaretButton name="保存选项" />
              <ToolButton aria-label="导出"><PdfIcon /></ToolButton>
              <ToolButton aria-label="预览"><PreviewIcon /></ToolButton>
              <ToolButton aria-label="打印"><PrintIcon /></ToolButton>
              <ToolButton aria-label="放映"><ProjectorIcon /></ToolButton>
              <CaretButton name="放映选项" />
              <ToolButton aria-label="撤销"><UndoIcon /></ToolButton>
              <ToolButton aria-label="重做"><UndoIcon flip /></ToolButton>
              <ToolButton aria-label="全屏"><FullIcon /></ToolButton>
              <ToolButton aria-label="提取"><ShareIcon /></ToolButton>
              <ToolButton aria-label="自定义工具栏"><CustomIcon /></ToolButton>
            </QuickAccess>
            <WindowTitle>新建文档1</WindowTitle>
            <WindowControls>
              <ControlButton aria-label="最小化"><Svg w={12} h={12} stroke="none"><path d="M0 8h11v2H0z" fill={INK} /></Svg></ControlButton>
              <ControlButton aria-label="还原">
                <Svg w={13} h={13} stroke={INK}><path d="M3 .5h9.500V10" /><path d="M1 4h9v8H1z" strokeWidth="1.500" /></Svg>
              </ControlButton>
              <ControlButton $close aria-label="关闭"><Svg w={10} h={10} stroke="#fff" strokeWidth="1.500"><path d="M1 1l8 8M9 1L1 9" /></Svg></ControlButton>
            </WindowControls>
          </TitleBar>
          <MenuTabs>
            <FileButton>文件</FileButton>
            {menus.map((menu, i) => <MenuTab key={menu} $active={i === 0}>{menu}</MenuTab>)}
            <UserButton>用户</UserButton>
          </MenuTabs>
        </Header>

        <RibbonArea />

        <TabStrip>
          <StripArrow $w={20} aria-label="展开"><Svg w={8} h={7} stroke="none"><path d="M0 0l4 3.500L0 7zM4 0l4 3.500L4 7z" fill={INK} /></Svg></StripArrow>
          <DocTab>
            <span>新建文档1</span>
            <CloseTab aria-label="关闭文档"><Svg w={10} h={10} stroke={INK} strokeWidth="1.500"><path d="M1 1l8 8M9 1L1 9" /></Svg></CloseTab>
          </DocTab>
          <StripArrow $w={18} aria-label="收起"><Svg w={8} h={7} stroke="none"><path d="M4 0L0 3.500 4 7zM8 0L4 3.500 8 7z" fill={INK} /></Svg></StripArrow>
        </TabStrip>

        <Workspace>
          <SideTools side="right" items={sideLeft} />
          <Canvas>
            <TabStop aria-label="制表符"><Svg w={7} h={7} stroke="#444" strokeWidth="2"><path d="M1 0v5h6" /></Svg></TabStop>
            <Ruler>
              {rulerNumbers.map((n, i) => (
                <RulerCell key={i} $stop={i > 3} $last={n === 18}>{n}</RulerCell>
              ))}
              <RulerMark $x={136} $y={-4} width="10" height="10"><path d="M.5.500h8v4l-4 4-4-4z" /></RulerMark>
              <RulerMark $x={164} $y={3} width="10" height="15"><path d="M.5 13.500v-5h8v5zM.5 8.500v-4l4-4 4 4v4" /></RulerMark>
              <RulerMark $x={866} $y={5} width="10" height="10"><path d="M.5 8.500v-4l4-4 4 4v4z" /></RulerMark>
            </Ruler>
            <VScroll>
              <SplitHandle />
              <ScrollButton aria-label="向上滚动"><Svg w={9} h={5} stroke="none"><path d="M0 5h9L4.500 0z" fill="#4c5157" /></Svg></ScrollButton>
              <VThumb />
              <ScrollButton aria-label="向下滚动"><Svg w={9} h={5} stroke="none"><path d="M0 0h9L4.500 5z" fill="#4c5157" /></Svg></ScrollButton>
            </VScroll>
            <VerticalRuler />
            <ExamPaper />
            <HScroll>
              <ScrollButton $w={15} aria-label="向左滚动"><Svg w={5} h={9} stroke="none"><path d="M5 0v9L0 4.500z" fill="#4c5157" /></Svg></ScrollButton>
              <HThumb />
              <ScrollButton $w={15} aria-label="向右滚动"><Svg w={5} h={9} stroke="none"><path d="M0 0v9l5-4.500z" fill="#4c5157" /></Svg></ScrollButton>
            </HScroll>
          </Canvas>
          <SideTools side="left" items={sideRight} />
        </Workspace>

        <StatusBar>
          <StatusCell $pad={8}>1/1 - 文字页</StatusCell>
          <StatusCell $line>
            <span>试题:  行 4</span><span>列 8</span><span>级别 0</span><span>深度 0 (CR)</span>
          </StatusCell>
          <StatusRight $line>
            <StatusFlag $plain>常规</StatusFlag>
            <FlagList>
              <StatusFlag>大写</StatusFlag><StatusFlag>数字</StatusFlag><StatusFlag>滚动</StatusFlag><StatusFlag>改写</StatusFlag>
            </FlagList>
            <ZoomButton aria-label="缩小"><Svg w={7} h={7} stroke="#fff" strokeWidth="2"><path d="M0 3.500h7" /></Svg></ZoomButton>
            <ZoomSlider aria-label="缩放" min="0" max="100" defaultValue="33" />
            <ZoomButton aria-label="放大"><Svg w={7} h={7} stroke="#fff" strokeWidth="2"><path d="M0 3.500h7M3.500 0v7" /></Svg></ZoomButton>
            <ZoomBox>
              <input aria-label="缩放比例" defaultValue="100" />
              <Spinner>
                <button aria-label="增加"><Svg w={5} h={3} stroke="none"><path d="M0 3h5L2.500 0z" fill="#000" /></Svg></button>
                <button aria-label="减少"><Svg w={5} h={3} stroke="none"><path d="M0 0h5L2.500 3z" fill="#000" /></Svg></button>
              </Spinner>
            </ZoomBox>
            <Svg w={12} h={12} stroke="none"><path d="M9 1h2v2H9zM9 5h2v2H9zM5 5h2v2H5zM9 9h2v2H9zM5 9h2v2H5zM1 9h2v2H1z" fill="#8fa9bd" /></Svg>
          </StatusRight>
        </StatusBar>

        <Overlay aria-hidden="true">
          <defs>
            <pattern id="stamp" width="264" height="264" patternUnits="userSpaceOnUse">
              <text
                x="0" y="0" transform="translate(20 208) rotate(-45)"
                fontFamily="Open Sans" fontWeight="600" fontSize="25"
                fill="rgba(0,0,0,0.01)" stroke="rgba(0,0,0,0.06)"
              >
                WWW.WEIDOWN.COM
              </text>
            </pattern>
          </defs>
          <rect width="100%" height="100%" fill="url(#stamp)" />
        </Overlay>
      </Window>
    </>
  )
}
